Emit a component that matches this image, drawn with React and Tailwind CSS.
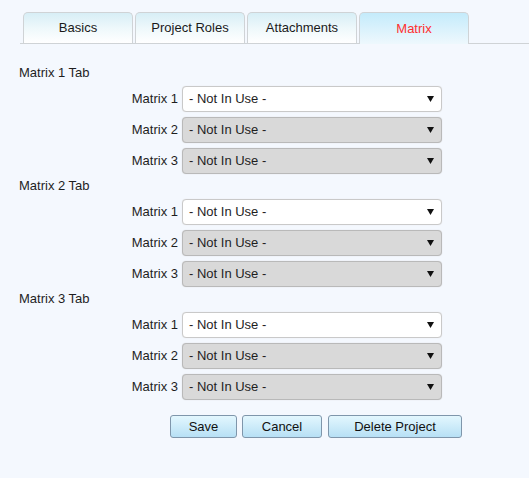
import React from 'react';

const TABS = ['Basics', 'Project Roles', 'Attachments', 'Matrix'];
const GROUPS = ['Matrix 1 Tab', 'Matrix 2 Tab', 'Matrix 3 Tab'];
const FIELDS = ['Matrix 1', 'Matrix 2', 'Matrix 3'];

function Arrow() {
  return (
    <svg width="7" height="6" viewBox="0 0 7 6" className="shrink-0 mr-[1px]">
      <polygon points="0,0 7,0 3.5,6" fill="#111" />
    </svg>
  );
}

function FakeSelect({ disabled }) {
  return (
    <div
      className={
        disabled
          ? 'flex items-center justify-between w-[260px] h-[26px] pl-[6px] pr-[6px] rounded-[4px] border border-[#b9b9b9] bg-[#d9d9d9] shadow-[0_0_1px_#ccc]'
          : 'flex items-center justify-between w-[260px] h-[26px] pl-[6px] pr-[6px] rounded-[4px] border border-[#c9c9c9] bg-white shadow-[0_0_1px_#ddd]'
      }
    >
      <span>- Not In Use -</span>
      <Arrow />
    </div>
  );
}

function Tab({ label, active }) {
  return (
    <div
      className={
        active
          ? 'flex items-center justify-center w-[110px] h-[32px] -mb-px border border-b-0 border-[#cfd3d6] rounded-t-[5px] bg-gradient-to-b from-[#c4ebfb] to-[#eef8fd] text-[#ff2f2f]'
          : 'flex items-center justify-center w-[110px] h-[31px] border border-b-0 border-[#cfd3d6] rounded-t-[5px] bg-gradient-to-b from-[#d7eef6] via-[#eef8fb] to-white text-[#1a1a1a]'
      }
    >
      {label}
    </div>
  );
}

function Button({ label, width }) {
  return (
    <button
      className={`${width} h-[23px] rounded-[3px] border border-[#7f96ab] bg-gradient-to-b from-[#e3f7fe] to-[#b7e0f5] text-[#111] text-[13px] leading-none`}
    >
      {label}
    </button>
  );
}

export default function App() {
  return (
    <div className="min-h-screen bg-[#f4f8fe] text-[13px] text-[#1e1e1e] font-['Liberation_Sans',Arial,sans-serif]">
      <div className="pt-[12px] pl-[20px]">
        <div className="flex items-end gap-[2px] pl-[3px] border-b border-[#cfd3d6]">
          {TABS.map((t) => (
            <Tab key={t} label={t} active={t === 'Matrix'} />
          ))}
        </div>
      </div>

      <div className="mt-[19px] flex flex-col gap-[2px]">
        {GROUPS.map((g) => (
          <div key={g}>
            <div className="pl-[19px] leading-[20px]">{g}</div>
            <div className="mt-[3px] flex flex-col gap-[5px]">
              {FIELDS.map((f, i) => (
                <div key={f} className="flex items-center">
                  <div className="w-[178px] text-right">{f}</div>
                  <div className="ml-[4px]">
                    <FakeSelect disabled={i > 0} />
                  </div>
                </div>
              ))}
            </div>
          </div>
        ))}
      </div>

      <div className="mt-[15px] pl-[170px] flex">
        <Button label="Save" width="w-[67px]" />
        <div className="ml-[5px]">
          <Button label="Cancel" width="w-[80px]" />
        </div>
        <div className="ml-[6px]">
          <Button label="Delete Project" width="w-[134px]" />
        </div>
      </div>
    </div>
  );
}
